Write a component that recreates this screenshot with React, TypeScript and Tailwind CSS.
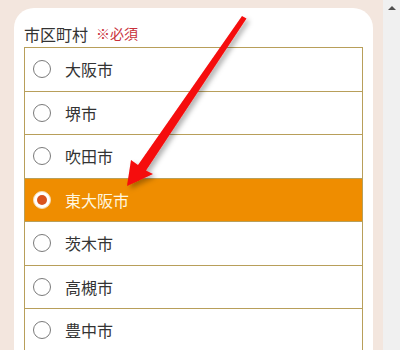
const cities = ["大阪市", "堺市", "吹田市", "東大阪市", "茨木市", "高槻市", "豊中市"];
const selected = "東大阪市";

const Radio = ({ checked }: { checked: boolean }) =>
  checked ? (
    <span className="flex h-[18px] w-[18px] items-center justify-center rounded-full border border-[#f6d9b0] bg-white">
      <span className="h-[10px] w-[10px] rounded-full bg-[#d9531e]" />
    </span>
  ) : (
    <span className="h-[18px] w-[18px] rounded-full border border-[#7a7a7a] bg-white" />
  );

const Arrow = () => (
  <svg className="pointer-events-none absolute left-0 top-0" width="400" height="350" viewBox="0 0 400 350">
    <defs>
      <filter id="sh" x="-20%" y="-20%" width="140%" height="140%">
        <feDropShadow dx="3" dy="3" stdDeviation="2.5" floodColor="#000" floodOpacity="0.3" />
      </filter>
    </defs>
    <polygon
      points="127,186 131,160 138,165 242,16 246.5,18.5 146,170.5 153,174"
      fill="#f50a0a"
      filter="url(#sh)"
    />
  </svg>
);

export default function App() {
  return (
    <div className="relative flex h-[350px] w-[400px] overflow-hidden bg-[#f3e6de] font-['Noto_Sans_CJK_JP','Noto_Sans',sans-serif]">
      <div className="flex-1 pl-[14px] pr-[10px] pt-[8px]">
        <div className="h-[400px] rounded-t-[20px] bg-white pl-[10px] pr-[10px] pt-[12px]">
          <div className="flex h-[27px] items-center gap-[8px]">
            <span className="text-[16px] text-[#333]">市区町村</span>
            <span className="text-[14px] text-[#c8303a]">※必須</span>
          </div>
          <ul className="border-x border-t border-[#b89f5a]">
            {cities.map((c) => {
              const on = c === selected;
              return (
                <li
                  key={c}
                  className={`flex h-[43.5px] items-center gap-[14px] border-b border-[#b89f5a] pl-[8px] ${
                    on ? "bg-[#ef8d00] text-[#fff6df]" : "bg-white text-[#333]"
                  }`}
                >
                  <Radio checked={on} />
                  <span className="text-[16px]">{c}</span>
                </li>
              );
            })}
          </ul>
        </div>
      </div>
      <div className="flex w-[17px] flex-col items-center bg-[#f0f0f0] pt-[6px]">
        <span className="h-0 w-0 border-x-[4px] border-b-[4px] border-x-transparent border-b-[#505050]" />
      </div>
      <Arrow />
    </div>
  );
}
